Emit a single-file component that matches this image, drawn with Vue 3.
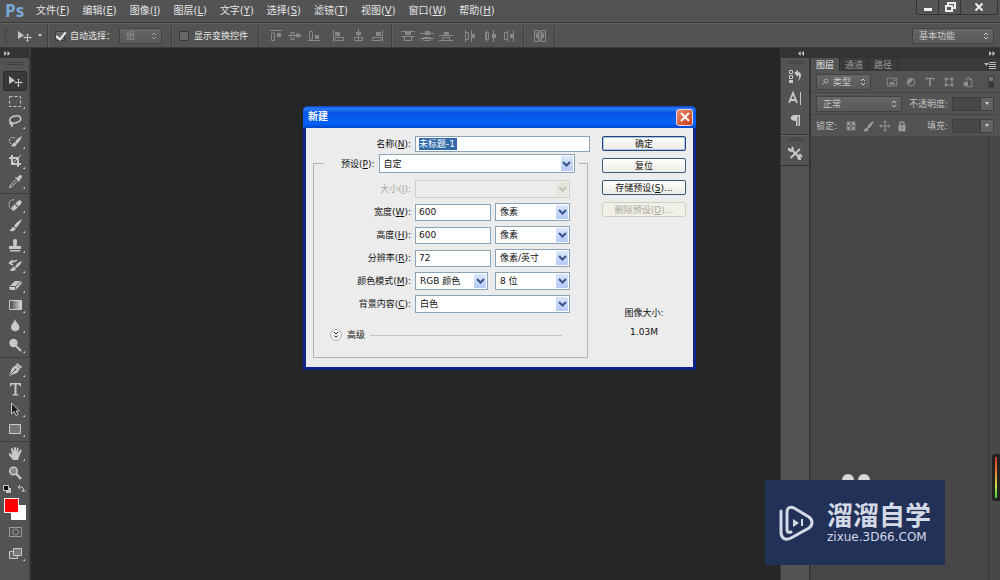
<script setup>
import { ref } from 'vue'

const menus = [
  ['文件', 'F'], ['编辑', 'E'], ['图像', 'I'], ['图层', 'L'], ['文字', 'Y'],
  ['选择', 'S'], ['滤镜', 'T'], ['视图', 'V'], ['窗口', 'W'], ['帮助', 'H']
]

const autoSelect = ref(true)
const showTransform = ref(false)
const docName = ref('未标题-1')
const width = ref('600')
const height = ref('600')
const resolution = ref('72')

const alignGroups = [
  [
    ['顶对齐', '<path d="M1 1.5H13M2.500 4V11.500H5.500V4Z"/><path class="f" d="M8 4H12V8H8Z"/>'],
    ['垂直居中对齐', '<path d="M0 6.500H14M3 3.500H6V10.500H3Z"/><path class="f" d="M8 4.500H12V8.500H8Z"/>'],
    ['底对齐', '<path d="M1 11.500H13M2.500 2.500H5.500V10H2.500Z"/><path class="f" d="M8 6H12V10H8Z"/>']
  ],
  [
    ['左对齐', '<path d="M1.500 1V13M3 8.500H11.500V11.500H3Z"/><path class="f" d="M3 3H8V7H3Z"/>'],
    ['水平居中对齐', '<path d="M7.500 0V13M3.500 8.500H11.500V11.500H3.500Z"/><path class="f" d="M5 3H10V6H5Z"/>'],
    ['右对齐', '<path d="M12.500 1V13M2.500 8.500H11V11.500H2.500Z"/><path class="f" d="M6 3H11V7H6Z"/>']
  ],
  [
    ['按顶分布', '<path d="M0 2.500H14M0 7.500H14M3.500 8V11.500H10.500V8"/><path class="f" d="M4 3H10V6H4Z"/>'],
    ['垂直居中分布', '<path d="M0 4.500H14M0 9.500H14M3.500 8.500H10.500V11.500H3.500Z"/><path class="f" d="M5 2H10V6H5Z"/>'],
    ['按底分布', '<path d="M0 6.500H14M0 11.500H14M3.500 11V8.500H10.500V11"/><path class="f" d="M5 3H10V6H5Z"/>']
  ],
  [
    ['按左分布', '<path d="M1.500 1V13M7.500 1V13M2 3.500H4.500V10.500H2"/><path class="f" d="M8 5H11V9H8Z"/>'],
    ['水平居中分布', '<path d="M3.500 1V13M10.500 1V13M2.500 3.500H5.500V10.500H2.500Z"/><path class="f" d="M9 5H13V9H9Z"/>'],
    ['按右分布', '<path d="M5.500 1V13M11.500 1V13M5 3.500H2.500V10.500H5"/><path class="f" d="M8 5H11V9H8Z"/>']
  ]
]

const brush = '<path class="f" d="M14 1C10 3 7 6 6 8.500L8 10C10 8 13 4 14 1ZM5.500 9C3.500 9 3.500 12 1 12.500C4 14 7.500 13 7.500 10.500Z"/>'

const toolGroups = [
  [
    ['移动工具', '<path class="f" d="M1 2V10L7 6.500Z"/><path d="M10.500 5V12.500M7 8.500H14M9.500 6L10.500 5L11.500 6M9.500 11.500L10.500 12.500L11.500 11.500M8 7.500L7 8.500L8 9.500M13 7.500L14 8.500L13 9.500"/>'],
    ['矩形选框工具', '<path stroke-dasharray="3 2" d="M1.500 2.500H12.500V12.500H1.500Z"/>'],
    ['套索工具', '<path stroke-width="1.500" d="M4 9C0 8 1 3 7 2C13 1 15 6 10 8C7 9.500 4 9.500 3 8C1 9 2.500 11 4.500 10.500L3.500 13"/>'],
    ['快速选择工具', '<path stroke-dasharray="2 1" d="M7 4.500C5 2 1 4 1.500 7.500C1.800 9.500 3 10 4 10"/><path class="f" d="M14 2C10 4 8 6 7 8.500L9 10C11 8 13 5 14 2ZM6.500 8.500C4.500 9 5 11 3 12C6 13.500 9 12 8.500 10Z"/>'],
    ['裁剪工具', '<path stroke-width="2" d="M4 1V10H13M1 4H10V13"/><path d="M4.500 9.500L13 1"/>'],
    ['吸管工具', '<path class="f" d="M9 4L11 1.500C13 0 15 2 13.500 4L11.500 6L12 7L11 8L7 4L8 3Z"/><path d="M7.500 6L2.500 11L1.500 13.500L4 12.500L9 7.500"/>']
  ],
  [
    ['污点修复画笔工具', '<path class="f" d="M6 7L10 3C12 1 15 4 13 6L7 12C5 14 2 11 4 9Z"/><path stroke-dasharray="2 1" d="M6 2C2 1 0 5 1.500 9L3 11"/><path stroke="#555" d="M7 6L10 9M9 6.500V7.500M7.500 8H8.500"/>'],
    ['画笔工具', brush],
    ['仿制图章工具', '<path class="f" d="M5 4C4 0 10 0 9 4C8.500 6 8.500 7 9 8H13V11H1V8H5C5.500 7 5.500 6 5 4ZM2 12H12V13.500H2Z"/>'],
    ['历史记录画笔工具', '<path class="f" d="M14 3C10 4 8 7 7 8.500L8.500 10C11 8 13 6 14 3ZM6 8.500C4 9 4 11.500 1.500 12C4 14 8 12.500 8 10.500Z"/><path stroke-width="1.500" d="M2 5C5 3 7 4 9 2M4.500 2L1.500 5L5 7"/>'],
    ['橡皮擦工具', '<path class="f" d="M7 3H13L14 5L8 12H2L1 9Z"/><path stroke="#555" d="M1.500 8.500H7.500L13 3.500M7.500 8.500L8 12"/>'],
    ['渐变工具', '<path fill="url(#toolGradient)" d="M1.500 2.500H13.500V11.500H1.500Z"/>'],
    ['模糊工具', '<path class="f" d="M7 1C6 5 3 6 3 9.500C3 14.500 11.500 14.500 11.500 9.500C11.500 6 8 5 7 1Z"/>'],
    ['减淡工具', '<circle class="f" cx="5.500" cy="5" r="4.200"/><path stroke-width="2" d="M8 8L13 13"/>']
  ],
  [
    ['钢笔工具', '<path class="f" d="M9 1L14 5L12.500 6.500L8 2.500ZM8 3L12 7L9 11L1 14L4 6Z"/><path stroke="#555" d="M1.500 13.500L7 8"/><circle cx="7.500" cy="7.500" r="1" fill="#555" stroke="none"/>'],
    ['横排文字工具', '<path class="f" d="M2 1H13V4.500H12C12 3 11.500 2.500 8.500 2.500V12L10.500 12.500V13.500H4.500V12.500L6.500 12V2.500C3.500 2.500 3 3 3 4.500H2Z"/>'],
    ['路径选择工具', '<path fill="#222" d="M3.500 1V12L6 9.500L8 13.500L10 12.500L8 9H11.500Z"/>'],
    ['矩形工具', '<path fill="#777" d="M1.500 2.500H12.500V11.500H1.500Z"/>']
  ],
  [
    ['抓手工具', '<path class="f" d="M4 8L3 3C3 1.500 4.500 1.500 5 3L6 6V2C6 .500 7.500 .500 8 2V6L9 2C10 .500 11 1.500 10.500 3L10 7L12 4C13 3 14 4 13.500 5L11 11L10 14H5L1 9C0 7.500 1.500 7 2.500 7.500L4 9Z"/>'],
    ['缩放工具', '<circle cx="5.500" cy="5" r="3.800" fill="#888" stroke-width="1.500"/><path stroke-width="2.500" d="M8.500 8L13 13"/>']
  ]
]
const noFlyout = ['移动工具', '缩放工具']

const filterIcons = [
  ['像素图层', '<path d="M1.500 2.500H12.500V11.500H1.500Z"/><path class="f" d="M3 10L6 6L8 8L9 7L11 10ZM9 4H11V6H9Z"/>'],
  ['调整图层', '<circle cx="7" cy="7" r="4.500"/><path class="f" d="M4 10C1 6 5 1 10 4Z"/>'],
  ['文字图层', '<path class="f" d="M2 2H12V5H11L10.500 3.500H8V12H6V3.500H3.500L3 5H2Z"/>'],
  ['形状图层', '<path d="M3.500 3.500H10.500V10.500H3.500Z"/><path class="f" d="M2 2H5V5H2ZM9 2H12V5H9ZM2 9H5V12H2ZM9 9H12V12H9Z"/>'],
  ['智能对象', '<path d="M5.500 8V2.500H9.500L11.500 4.500V12.500H6"/><path class="f" d="M2 7H7V12H2ZM9 2L12 5H9Z"/>']
]
const lockIcons = [
  ['锁定透明像素', '<path d="M2.500 2.500H11.500V11.500H2.500Z"/><path class="f" d="M3 3H6V6H3ZM8 3H11V6H8ZM6 6H8V8H6ZM3 8H6V11H3ZM8 8H11V11H8Z"/>'],
  ['锁定图像像素', brush],
  ['锁定位置', '<path d="M7 1V13M1 7H13M5 3L7 1L9 3M5 11L7 13L9 11M3 5L1 7L3 9M11 5L13 7L11 9"/>'],
  ['锁定全部', '<path stroke-width="1.500" d="M4.500 7V4.500C4.500 1.500 9.500 1.500 9.500 4.500V7"/><path class="f" fill-rule="evenodd" d="M3 6H11V13H3ZM6.500 8V11H7.500V8Z"/>']
]
const dockGroups = [
  [
    ['历史记录', '<path d="M1.500 1.500H4.500V4.500H1.500ZM1.500 6.500H4.500V9.500H1.500Z"/><path class="f" d="M1 11H5V14H1ZM6 4L10 1V3C14 3 14 9 10 12C12 8 11 6 10 6V8Z"/>'],
    ['字符', '<path stroke-width="1.800" d="M1 12L5 2L9 12M2.500 9H7.500"/><path d="M12.500 1V14"/>'],
    ['段落', '<path class="f" d="M7 2H12V13H10.500V3.500H9.500V13H8V8C1 8 1 2 7 2Z"/>']
  ],
  [['工具预设', '<path stroke-width="2" d="M3 3L12 12M12 3L2.500 12"/><path stroke-width="2" d="M1 2V4L3 5L5 3L4 1M14 11L12 9L10 11L11 13H13"/>']]
]
</script>

<template>
  <div class="app">
    <svg class="defs" aria-hidden="true">
      <linearGradient id="toolGradient"><stop offset="0" stop-color="#444" /><stop offset="1" stop-color="#ddd" /></linearGradient>
    </svg>

    <header class="menubar">
      <span class="logo">Ps</span>
      <nav class="menus">
        <button v-for="m in menus" :key="m[1]" type="button">{{ m[0] }}(<u>{{ m[1] }}</u>)</button>
      </nav>
      <div class="winbtns">
        <button type="button" aria-label="最小化"><svg viewBox="0 0 14 14"><path class="f" d="M3 8H11V11H3Z" /></svg></button>
        <button type="button" aria-label="还原"><svg viewBox="0 0 14 14"><path stroke-width="2" d="M5 5V3H12V8H10M3 6H9V11H3Z" /></svg></button>
        <button type="button" class="wide" aria-label="关闭"><svg viewBox="0 0 14 14"><path stroke-width="2" d="M3.500 3.500L10.500 10.500M10.500 3.500L3.500 10.500" /></svg></button>
      </div>
    </header>

    <div class="options">
      <i class="grip"></i>
      <button type="button" class="current" aria-label="当前工具">
        <svg viewBox="0 0 15 14"><g v-html="toolGroups[0][0][1]"></g></svg><i class="caret"></i>
      </button>
      <i class="sep"></i>
      <label class="check"><input v-model="autoSelect" type="checkbox" />自动选择：</label>
      <div class="dsel group"><select aria-label="自动选择对象" disabled><option>组</option></select><svg viewBox="0 0 6 8"><path d="M1 3L3 1L5 3M1 5L3 7L5 5" /></svg></div>
      <i class="sep"></i>
      <label class="check transform"><input v-model="showTransform" type="checkbox" />显示变换控件</label>
      <i class="sep"></i>
      <template v-for="(g, i) in alignGroups" :key="i">
        <div class="aligns">
          <button v-for="a in g" :key="a[0]" type="button" :aria-label="a[0]"><svg viewBox="0 0 14 14" v-html="a[1]"></svg></button>
        </div>
        <i v-if="i % 2" class="sep"></i>
      </template>
      <div class="aligns">
        <button type="button" aria-label="自动对齐图层"><svg viewBox="0 0 14 14"><path d="M1.500 1.500H5.500V12.500H1.500ZM8.500 1.500H12.500V12.500H8.500ZM7 1V13M2 4H5M9 4H12" /><path class="f" d="M3 5H5V9H3ZM9 5H11V9H9Z" /></svg></button>
      </div>
      <i class="sep"></i>
      <div class="dsel workspace"><select aria-label="工作区"><option>基本功能</option></select><svg viewBox="0 0 6 8"><path d="M1 3L3 1L5 3M1 5L3 7L5 5" /></svg></div>
    </div>

    <div class="workarea">
      <aside class="tools">
        <div class="strip"><svg viewBox="0 0 8 6"><path class="f" d="M0 0L3 3L0 6ZM4 0L7 3L4 6Z" /></svg></div>
        <i class="hgrip"></i>
        <div v-for="(g, i) in toolGroups" :key="i" class="toolgroup">
          <button v-for="t in g" :key="t[0]" type="button" :aria-label="t[0]" :class="{ active: t[0] === '移动工具', fly: !noFlyout.includes(t[0]) }">
            <svg viewBox="0 0 15 15" v-html="t[1]"></svg>
          </button>
        </div>
        <div class="mini">
          <button type="button" aria-label="默认颜色"><svg viewBox="0 0 10 10"><path fill="#111" d="M1.500 1.500H6.500V6.500H1.500Z" /><path class="f" d="M7 4H9V9H4V7H7Z" /></svg></button>
          <button type="button" aria-label="切换颜色"><svg viewBox="0 0 10 10"><path d="M2 3H5C7 3 7.500 4 7.500 7M4 1L2 3L4 5M5.500 6L7.500 8L9.500 6" /></svg></button>
        </div>
        <div class="swatches">
          <button type="button" class="bg" aria-label="背景色"></button>
          <button type="button" class="fg" aria-label="前景色"></button>
        </div>
        <div class="modes">
          <button type="button" aria-label="快速蒙版"><svg class="dim" viewBox="0 0 15 15"><path d="M1.500 3.500H13.500V12.500H1.500Z" /><circle cx="7.500" cy="8" r="3" /></svg></button>
          <button type="button" class="fly" aria-label="屏幕模式"><svg viewBox="0 0 15 15"><path fill="#666" d="M1.500 5.500H9.500V12.500H1.500Z" /><path fill="#777" d="M5.500 2.500H13.500V9.500H5.500Z" /></svg></button>
        </div>
      </aside>

      <main class="canvas"></main>

      <aside class="dock">
        <div class="strip right"><svg viewBox="0 0 8 6"><path class="f" d="M3 0L0 3L3 6ZM7 0L4 3L7 6Z" /></svg></div>
        <div v-for="(g, i) in dockGroups" :key="i" class="dockgroup">
          <i class="hgrip"></i>
          <button v-for="d in g" :key="d[0]" type="button" :aria-label="d[0]"><svg viewBox="0 0 15 15" v-html="d[1]"></svg></button>
        </div>
      </aside>

      <aside class="panel">
        <div class="strip right"><svg viewBox="0 0 8 6"><path class="f" d="M0 0L3 3L0 6ZM4 0L7 3L4 6Z" /></svg></div>
        <div class="tabs">
          <button type="button" class="on">图层</button><button type="button">通道</button><button type="button">路径</button>
          <button type="button" class="menu" aria-label="面板菜单"><svg viewBox="0 0 12 8"><path class="f" d="M0 2H5L2.500 5Z" /><path d="M5 1.500H12M5 3.500H12M5 5.500H12M5 7.500H12" /></svg></button>
        </div>
        <div class="prow">
          <div class="dsel kind">
            <svg class="lens" viewBox="0 0 8 8"><circle cx="5" cy="3" r="2" /><path d="M3.500 4.500L1 7" /></svg>
            <select aria-label="图层类型"><option>类型</option></select><svg viewBox="0 0 6 8"><path d="M1 3L3 1L5 3M1 5L3 7L5 5" /></svg>
          </div>
          <div class="icons filters"><button v-for="f in filterIcons" :key="f[0]" type="button" :aria-label="f[0]"><svg viewBox="0 0 14 14" v-html="f[1]"></svg></button></div>
          <button type="button" class="toggle" aria-label="图层过滤开关"></button>
        </div>
        <div class="prow">
          <div class="dsel blend"><select aria-label="混合模式"><option>正常</option></select><svg viewBox="0 0 6 8"><path d="M1 3L3 1L5 3M1 5L3 7L5 5" /></svg></div>
          <label class="val">不透明度:<input type="text" /></label><button type="button" class="drop" aria-label="不透明度滑块"><i class="caret"></i></button>
        </div>
        <div class="prow">
          <span class="lock">锁定:</span>
          <div class="icons locks"><button v-for="l in lockIcons" :key="l[0]" type="button" :aria-label="l[0]"><svg viewBox="0 0 14 14" v-html="l[1]"></svg></button></div>
          <label class="val">填充:<input type="text" /></label><button type="button" class="drop" aria-label="填充滑块"><i class="caret"></i></button>
        </div>
        <div class="layers"><div class="rail"></div></div>
      </aside>
    </div>

    <form class="dialog" role="dialog" aria-label="新建" @submit.prevent>
      <div class="title"><h1>新建</h1><button type="button" aria-label="关闭"><svg viewBox="0 0 14 14"><path stroke-width="2" d="M3 3L11 11M11 3L3 11" /></svg></button></div>
      <div class="body">
        <div class="fields">
          <div class="name">
            <label for="n">名称(<u>N</u>):</label>
            <div class="namebox"><input id="n" v-model="docName" type="text" /></div>
          </div>
          <fieldset>
            <legend>
              <label for="p">预设(<u>P</u>):</label>
              <div class="xsel preset"><select id="p"><option>自定</option></select><span class="arr"><svg viewBox="0 0 9 8"><path d="M1 2L4.500 5.500L8 2" /></svg></span></div>
            </legend>
            <div class="rows">
              <label for="s" class="off">大小(<u>I</u>):</label>
              <div class="xsel full off"><select id="s" disabled><option></option></select><span class="arr"><svg viewBox="0 0 9 8"><path d="M1 2L4.500 5.500L8 2" /></svg></span></div>
              <label for="w">宽度(<u>W</u>):</label>
              <input id="w" v-model="width" type="text" />
              <div class="xsel"><select aria-label="宽度单位"><option>像素</option></select><span class="arr"><svg viewBox="0 0 9 8"><path d="M1 2L4.500 5.500L8 2" /></svg></span></div>
              <label for="h">高度(<u>H</u>):</label>
              <input id="h" v-model="height" type="text" />
              <div class="xsel"><select aria-label="高度单位"><option>像素</option></select><span class="arr"><svg viewBox="0 0 9 8"><path d="M1 2L4.500 5.500L8 2" /></svg></span></div>
              <label for="r">分辨率(<u>R</u>):</label>
              <input id="r" v-model="resolution" type="text" />
              <div class="xsel"><select aria-label="分辨率单位"><option>像素/英寸</option></select><span class="arr"><svg viewBox="0 0 9 8"><path d="M1 2L4.500 5.500L8 2" /></svg></span></div>
              <label for="m">颜色模式(<u>M</u>):</label>
              <div class="xsel mode"><select id="m"><option>RGB 颜色</option></select><span class="arr"><svg viewBox="0 0 9 8"><path d="M1 2L4.500 5.500L8 2" /></svg></span></div>
              <div class="xsel"><select aria-label="位深度"><option>8 位</option></select><span class="arr"><svg viewBox="0 0 9 8"><path d="M1 2L4.500 5.500L8 2" /></svg></span></div>
              <label for="b">背景内容(<u>C</u>):</label>
              <div class="xsel full"><select id="b"><option>白色</option></select><span class="arr"><svg viewBox="0 0 9 8"><path d="M1 2L4.500 5.500L8 2" /></svg></span></div>
            </div>
            <div class="advanced">
              <button type="button" aria-label="展开高级"><svg viewBox="0 0 8 8"><path d="M2 1L4 3L6 1M2 4.500L4 6.500L6 4.500" /></svg></button>
              <span>高级</span><i></i>
            </div>
          </fieldset>
        </div>
        <div class="actions">
          <button type="submit" class="primary">确定</button>
          <button type="button">复位</button>
          <button type="button">存储预设(<u>S</u>)...</button>
          <button type="button" disabled>删除预设(<u>D</u>)...</button>
          <p class="size"><span>图像大小:</span><span>1.03M</span></p>
        </div>
      </div>
    </form>

    <div class="mascot"><i></i><i></i></div>
    <div class="meter"><i></i></div>
    <div class="watermark">
      <svg viewBox="0 0 36 36"><path stroke-width="3" stroke-linecap="round" d="M2 6V27C2 33 6 36 12 33L30 23C34 20 34 15 30 12L15 3C11 1 8 3 8 7V24C8 27 9 28 12 27" /><path class="f" d="M14 14V22L20 18Z" /><path stroke-width="2" d="M23 14V21" /></svg>
      <div class="brand"><strong>溜溜自学</strong><span>zixue.3D66.COM</span></div>
    </div>
  </div>
</template>

<style>
html, body { background: #262626; }
</style>

<style scoped>
.app { position: relative; display: flex; flex-direction: column; min-height: 100vh; overflow: hidden; background: #262626; color: #ddd; font: 9px/12px "DejaVu Sans", "Noto Sans CJK SC", sans-serif; }
.app *, .app :deep(*) { box-sizing: border-box; }
button, input, select { font: inherit; color: inherit; margin: 0; padding: 0; border: 0; background: none; border-radius: 0; }
button { display: flex; align-items: center; justify-content: center; white-space: nowrap; }
select { appearance: none; width: 100%; height: 100%; opacity: 1; }
u { text-underline-offset: 1px; }
svg { display: block; fill: none; stroke: currentColor; stroke-width: 1; flex: none; }
svg .f, svg :deep(.f) { fill: currentColor; stroke: none; }
.defs { position: absolute; width: 0; height: 0; }

.menubar { display: flex; height: 23px; background: #535353; border-bottom: 1px solid #3c3c3c; }
.logo { width: 30px; padding-left: 5px; font: bold 17px/21px "Open Sans", sans-serif; color: #76a9d8; }
.menus { display: flex; gap: 13px; padding-left: 6px; flex: 1; font-size: 10px; color: #e4e4e4; }
.menus button { height: 21px; }
.winbtns { display: flex; height: 15px; margin-right: 2px; border: 1px solid #333; border-top: 0; border-radius: 0 0 3px 3px; background: #555; color: #eee; }
.winbtns button { width: 22px; border-right: 1px solid #333; }
.winbtns .wide { width: 36px; border: 0; }
.winbtns svg { width: 14px; height: 14px; }

.options { display: flex; align-items: center; height: 25px; padding: 0 6px 0 4px; background: #535353; border-top: 1px solid #626262; border-bottom: 1px solid #3a3a3a; }
.grip { width: 3px; height: 16px; border: 1px solid #454545; border-width: 0 1px; }
.current { gap: 6px; margin-left: 10px; color: #c4c4c4; }
.current svg { width: 15px; height: 14px; }
.caret { width: 0; height: 0; border: 2px solid transparent; border-top: 3px solid #ccc; border-bottom: 0; }
.sep { width: 2px; height: 22px; margin: 0 6px; border-left: 1px solid #404040; border-right: 1px solid #5e5e5e; flex: none; }
.current + .sep { margin-left: 5px; }
.check { display: flex; align-items: center; gap: 5px; white-space: nowrap; color: #e6e6e6; }
.transform { margin-right: 4px; }
.check input { position: relative; appearance: none; width: 10px; height: 10px; background: #666; border: 1px solid #393939; }
.check input:checked::after { content: ""; position: absolute; left: 2px; top: -2px; width: 4px; height: 8px; border: solid #eee; border-width: 0 2px 2px 0; transform: rotate(40deg); }
.dsel { position: relative; height: 16px; border: 1px solid #424242; border-radius: 1px; background: linear-gradient(#666, #595959); color: #c8c8c8; }
.dsel select { padding-left: 6px; }
.dsel svg { position: absolute; right: 4px; top: 3px; width: 6px; height: 8px; pointer-events: none; }
.group { width: 43px; margin: 0 3px 0 4px; color: #999; }
.workspace { width: 82px; margin-left: auto; }
.aligns { display: flex; color: #888; }
.aligns button { width: 19px; height: 16px; }
.aligns svg { width: 14px; height: 14px; }
.aligns + .aligns { margin-left: 6px; }
.aligns + .sep { margin: 0 5px; }

.workarea { display: flex; flex: 1; }
.strip { display: flex; align-items: center; height: 10px; padding: 0 4px; background: #333; color: #ccc; }
.strip svg { width: 7px; height: 5px; }
.strip.right { justify-content: flex-end; }
.hgrip { display: block; width: 15px; height: 3px; border: 1px solid #404040; border-width: 1px 0; }
.tools { display: flex; flex-direction: column; width: 31px; background: #535353; border-right: 2px solid #3a3a3a; color: #c8c8c8; }
.tools .hgrip { margin: 4px 7px 6px; }
.toolgroup { padding: 1px 2px 2px 3px; border-bottom: 1px solid #3f3f3f; }
.hgrip + .toolgroup { padding-top: 0; }
.toolgroup:has(+ .mini) { border: 0; padding-bottom: 0; }
.toolgroup button, .modes button { position: relative; width: 24px; height: 20px; }
.toolgroup svg, .modes svg { width: 15px; height: 15px; }
.active { background: #383838; border: 1px solid #2c2c2c; border-radius: 2px; }
.fly::after { content: ""; position: absolute; right: 2px; bottom: 2px; border: 1px solid #ddd; border-top-color: transparent; border-left-color: transparent; }
.mini { display: flex; justify-content: space-between; padding: 1px 3px 3px 2px; }
.mini svg { width: 10px; height: 10px; }
.swatches { position: relative; height: 24px; }
.swatches button { position: absolute; width: 15px; height: 15px; }
.swatches .fg { left: 4px; top: 1px; background: #f00; border: 1px solid #eee; }
.swatches .bg { left: 11px; top: 8px; background: #fff; }
.modes { display: flex; flex-direction: column; gap: 2px; padding: 0 3px; }
.dim { color: #999; }

.canvas { flex: 1; background: #262626; }

.dock { width: 31px; background: #535353; border-left: 1px solid #3a3a3a; border-right: 2px solid #363636; color: #c8c8c8; }
.dockgroup { display: flex; flex-direction: column; align-items: center; gap: 2px; padding: 3px 0 4px; border-bottom: 1px solid #333; }
.dockgroup + .dockgroup { padding: 2px 0; border-top: 1px solid #606060; }
.dockgroup button { width: 26px; height: 20px; }
.dockgroup svg { width: 15px; height: 15px; }

.panel { display: flex; flex-direction: column; width: 189px; background: #535353; color: #c0c0c0; }
.tabs { display: flex; height: 13px; background: #3a3a3a; color: #999; }
.tabs button { width: 29px; border-right: 1px solid #2e2e2e; }
.tabs .on { background: #535353; color: #eee; }
.tabs .menu { width: 14px; margin: 0 3px 0 auto; border: 0; color: #bbb; }
.tabs svg { width: 12px; height: 8px; }
.prow { display: flex; align-items: center; height: 22px; padding: 0 6px 0 5px; border-bottom: 1px solid #474747; white-space: nowrap; }
.kind { width: 55px; }
.kind select { padding-left: 16px; }
.dsel .lens { left: 4px; right: auto; width: 8px; color: #aaa; }
.blend { width: 86px; }
.icons { display: flex; color: #909090; }
.icons svg { width: 12px; height: 12px; }
.filters { margin-left: 11px; }
.filters button { width: 19px; }
.toggle { width: 6px; height: 12px; margin-left: auto; background: linear-gradient(#777 40%, #3c3c3c 40%); border: 1px solid #404040; }
.locks { margin-left: 5px; color: #a0a0a0; }
.locks button { width: 17px; }
.val { display: flex; align-items: center; gap: 4px; margin-left: auto; }
.val input { width: 28px; height: 14px; background: #484848; border: 1px solid #3f3f3f; }
.drop { width: 14px; height: 14px; background: #626262; border: 1px solid #404040; }
.layers { display: flex; justify-content: flex-end; flex: 1; background: #464646; }
.rail { width: 12px; border-left: 2px solid #3b3b3b; background: #484848; }

.dialog { position: absolute; left: 303px; top: 106px; width: 393px; border: solid #10238a; border-width: 0 3px 3px; border-radius: 5px 5px 0 0; background: #ececec; color: #111; }
.title { display: flex; align-items: center; justify-content: space-between; height: 22px; margin: 0 -3px; padding: 0 3px 0 5px; border-radius: 5px 5px 0 0; background: linear-gradient(#0a3fc8, #2a7cf8 12%, #0755e4 30%, #0562fa 80%, #0348c8); color: #fff; }
.title h1 { margin: 0; font-size: 10px; line-height: 14px; font-weight: bold; }
.title button { width: 17px; height: 17px; border: 1px solid #e8d8e0; border-radius: 3px; background: linear-gradient(135deg, #e88a70, #c83c18); }
.title svg { width: 14px; height: 14px; }
.body { display: flex; gap: 12px; padding: 8px 7px 9px; }
.fields { flex: 1; min-width: 0; }
.name { display: flex; align-items: center; justify-content: flex-end; gap: 4px; height: 16px; }
.fields input { height: 17px; padding: 0 3px; border: 1px solid #8ba3b8; background: #fff; min-width: 0; width: 100%; }
.namebox { display: flex; align-items: center; width: 175px; height: 16px; padding: 0 3px; border: 1px solid #8ba3b8; background: #fff; }
.fields .namebox input { width: 38px; height: 12px; padding: 0; border: 0; background: #3169a8; color: #fff; }
fieldset { margin: 2px 2px 0 0; padding: 7px 7px 16px 0; border: 1px solid #b4b4b0; min-width: 0; }
legend { display: flex; align-items: center; gap: 4px; margin-left: 10px; padding: 0 4px 0 17px; white-space: nowrap; }
.xsel { position: relative; height: 18px; border: 1px solid #8ba3b8; background: #fff; }
.xsel select { padding-left: 4px; color: #111; }
.arr { position: absolute; right: 1px; top: 1px; bottom: 1px; display: flex; align-items: center; justify-content: center; width: 12px; background: linear-gradient(#dbe6fc, #b5caf5); border-radius: 1px; color: #35558c; pointer-events: none; }
.arr svg { width: 9px; height: 8px; stroke-width: 2; }
.preset { width: 196px; height: 19px; }
.rows { display: grid; grid-template-columns: 97px 76px 75px; column-gap: 4px; row-gap: 5px; align-items: center; }
.rows label { text-align: right; white-space: nowrap; }
.full { grid-column: span 2; }
.mode { margin-right: 3px; }
.off { color: #aaa89c; }
.xsel.off { border-color: #d2d0c4; background: #ececea; }
.off .arr { background: #e6e5de; color: #c5c3b8; }
.advanced { display: flex; align-items: center; gap: 5px; margin: 16px 18px 0 16px; }
.advanced button { width: 12px; height: 12px; border: 1px solid #aaa; border-radius: 50%; background: #fafafa; }
.advanced svg { width: 8px; height: 8px; }
.advanced i { flex: 1; height: 1px; background: #c4c4c0; }
.actions { display: flex; flex: none; flex-direction: column; gap: 7px; width: 84px; }
.actions button { height: 15px; border: 1px solid #3a5878; border-radius: 2px; background: linear-gradient(#fff, #ecebe4); }
.actions .primary { border-color: #244872; box-shadow: inset 0 0 0 1px #a9c4ec; }
.actions button:disabled { border-color: #d0cebf; color: #aaa89c; background: #f0efe8; }
.size { display: flex; flex-direction: column; align-items: center; gap: 7px; margin: 83px 0 0; }

.mascot { position: absolute; right: 130px; bottom: 94px; display: flex; gap: 4px; }
.mascot i { width: 12px; height: 12px; border-radius: 50%; background: #d8d8d8; }
.meter { position: absolute; right: 0; bottom: 79px; width: 8px; height: 47px; padding: 3px; background: #222; border-radius: 3px 0 0 3px; }
.meter i { display: block; width: 2px; height: 100%; background: linear-gradient(#d33, #d83 40%, #cd4 70%, #4c4); }
.watermark { position: absolute; right: 55px; bottom: 15px; display: flex; align-items: center; gap: 12px; width: 180px; height: 85px; padding-left: 14px; background: #223158; color: #d4d9e6; }
.watermark svg { width: 36px; height: 36px; }
.brand { display: flex; flex-direction: column; gap: 2px; }
.watermark strong { font-size: 26px; line-height: 26px; font-weight: 700; }
.watermark span { font-size: 12px; line-height: 12px; }
</style>
